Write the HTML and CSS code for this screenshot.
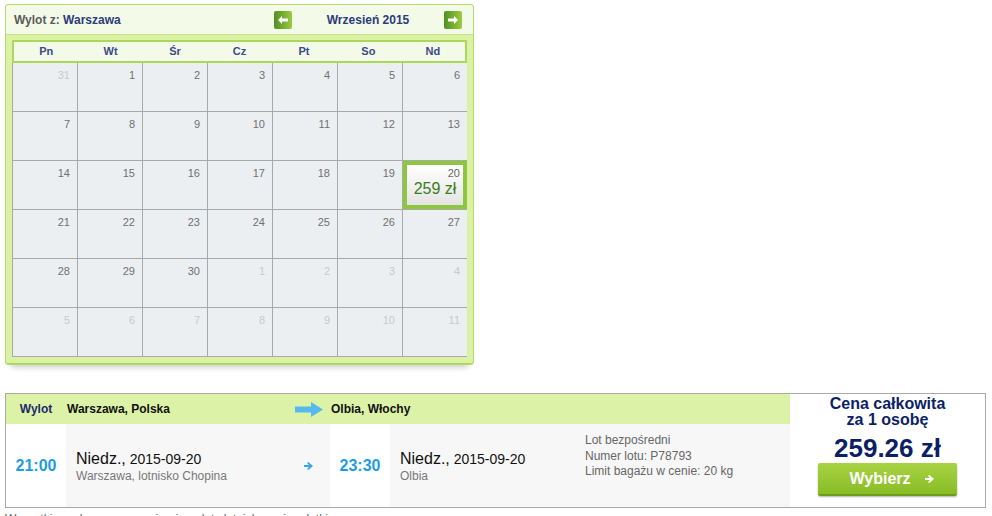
FILE: index.html
```html
<!DOCTYPE html>
<html>
  <head>
    <title>Wybór lotu</title>
    <link rel="stylesheet" href="styles.css">
  </head>
  <body>
    <div class="calendar">
      <div class="cal-head">
        <div class="from">Wylot z: <span class="city">Warszawa</span></div>
        <div class="month-nav">
          <button class="nav-btn" title="Poprzedni miesiąc">
            <svg width="10" height="8" viewBox="0 0 10 8"><polygon points="0,4 4,0 4,2.5 10,2.5 10,5.5 4,5.5 4,8" fill="#fff"/></svg>
          </button>
          <span class="month">Wrzesień 2015</span>
          <button class="nav-btn" title="Następny miesiąc">
            <svg width="10" height="8" viewBox="0 0 10 8"><polygon points="10,4 6,0 6,2.5 0,2.5 0,5.5 6,5.5 6,8" fill="#fff"/></svg>
          </button>
        </div>
      </div>

      <div class="cal-body">
        <div class="day-names">
          <span>Pn</span><span>Wt</span><span>Śr</span><span>Cz</span><span>Pt</span><span>So</span><span>Nd</span>
        </div>
        <div class="days">
          <div class="day other">31</div>
          <div class="day">1</div>
          <div class="day">2</div>
          <div class="day">3</div>
          <div class="day">4</div>
          <div class="day">5</div>
          <div class="day">6</div>

          <div class="day">7</div>
          <div class="day">8</div>
          <div class="day">9</div>
          <div class="day">10</div>
          <div class="day">11</div>
          <div class="day">12</div>
          <div class="day">13</div>

          <div class="day">14</div>
          <div class="day">15</div>
          <div class="day">16</div>
          <div class="day">17</div>
          <div class="day">18</div>
          <div class="day">19</div>
          <div class="day selected">20<div class="price">259 zł</div></div>

          <div class="day">21</div>
          <div class="day">22</div>
          <div class="day">23</div>
          <div class="day">24</div>
          <div class="day">25</div>
          <div class="day">26</div>
          <div class="day">27</div>

          <div class="day">28</div>
          <div class="day">29</div>
          <div class="day">30</div>
          <div class="day other">1</div>
          <div class="day other">2</div>
          <div class="day other">3</div>
          <div class="day other">4</div>

          <div class="day other">5</div>
          <div class="day other">6</div>
          <div class="day other">7</div>
          <div class="day other">8</div>
          <div class="day other">9</div>
          <div class="day other">10</div>
          <div class="day other">11</div>
        </div>
      </div>
    </div>

    <div class="flight">
      <div class="flight-main">
        <div class="flight-head">
          <div class="label">Wylot</div>
          <div class="place">
            Warszawa, Polska
            <svg class="big-arrow" width="28" height="15" viewBox="0 0 28 15"><polygon points="0,4.5 16,4.5 16,0 28,7.5 16,15 16,10.5 0,10.5" fill="#55b9ef"/></svg>
          </div>
          <div class="place dest">Olbia, Włochy</div>
        </div>
        <div class="flight-row">
          <div class="time">21:00</div>
          <div class="stop">
            <div>
              <div class="date"><span class="weekday">Niedz.,</span> 2015-09-20</div>
              <div class="airport">Warszawa, lotnisko Chopina</div>
            </div>
            <svg class="small-arrow" width="9" height="8" viewBox="0 0 9 8"><polygon points="0,3 5,3 3,1 4.3,0 9,4 4.3,8 3,7 5,5 0,5" fill="#39a7e2"/></svg>
          </div>
          <div class="time">23:30</div>
          <div class="stop arrival">
            <div class="arr-place">
              <div class="date"><span class="weekday">Niedz.,</span> 2015-09-20</div>
              <div class="airport">Olbia</div>
            </div>
            <div class="info">
              Lot bezpośredni<br>
              Numer lotu: P78793<br>
              Limit bagażu w cenie: 20 kg
            </div>
          </div>
        </div>
      </div>
      <div class="total">
        <div class="total-label">Cena całkowita<br>za 1 osobę</div>
        <div class="total-price">259.26 zł</div>
        <button class="choose">Wybierz
          <svg width="9" height="8" viewBox="0 0 9 8"><polygon points="0,3 5,3 3,1 4.3,0 9,4 4.3,8 3,7 5,5 0,5" fill="#fff"/></svg>
        </button>
      </div>
    </div>

    <p class="note">Wszystkie podane ceny zawierają opłaty lotniskowe i podatki.</p>
  </body>
</html>
```

FILE: styles.css
```css
body {
  margin: 0;
  padding: 4px 5px;
  font-family: "Liberation Sans", Arial, sans-serif;
  background: #fff;
  color: #333;
}

/* kalendarz */
.calendar {
  width: 467px;
  border: 1px solid #b3da6c;
  border-radius: 3px;
  background: #dbf1a3;
  box-shadow: 0 8px 6px -6px rgba(0, 0, 0, 0.22);
}
.cal-head {
  height: 29px;
  display: flex;
  align-items: center;
  justify-content: space-between;
  padding: 0 11px 0 8px;
  background: #f3fae8;
  border-bottom: 1px solid #c3e28c;
  border-radius: 3px 3px 0 0;
  font-size: 12px;
  font-weight: bold;
}
.from {
  color: #5a5a5a;
}
.from .city,
.month {
  color: #2d3b7c;
}
.month-nav {
  width: 188px;
  display: flex;
  align-items: center;
  justify-content: space-between;
}
.nav-btn {
  width: 18px;
  height: 18px;
  padding: 0;
  border: none;
  border-radius: 2px;
  background: linear-gradient(to right, #4e8f25, #9ccb3d);
  display: flex;
  align-items: center;
  justify-content: center;
  cursor: pointer;
}
.cal-body {
  padding: 5px 6px 6px 6px;
  border-bottom: 1px solid #a9d45a;
  border-radius: 0 0 3px 3px;
}
.day-names {
  display: grid;
  grid-template-columns: repeat(7, 1fr);
  height: 19px;
  border: 2px solid #a9d85d;
  background: #f3fae8;
  font-size: 11px;
  font-weight: bold;
  color: #3b4a8b;
  text-align: center;
  line-height: 19px;
}
.days {
  display: grid;
  grid-template-columns: repeat(7, 64px);
  grid-auto-rows: 48px;
  gap: 1px;
  padding: 0 1px 1px 1px;
  background: #a9a9a9;
}
.day {
  background: #eceff2;
  text-align: right;
  padding: 6px 7px 0 0;
  font-size: 11px;
  color: #707070;
}
.day.other {
  color: #c9c9c9;
}
.day.selected {
  border: 4px solid #8dc63f;
  padding: 2px 3px 0 0;
  background: linear-gradient(#ffffff, #e4e4e4);
  color: #666;
}
.price {
  text-align: center;
  font-size: 16px;
  color: #3b7d1c;
  margin-top: 1px;
  padding-left: 3px;
}

/* lot */
.flight {
  display: flex;
  width: 979px;
  margin-top: 28px;
  border: 1px solid #aaa;
}
.flight-main {
  width: 784px;
}
.flight-head {
  display: grid;
  grid-template-columns: 60px 264px 460px;
  height: 30px;
  align-items: center;
  background: #dcf3a7;
  font-size: 12px;
  font-weight: bold;
}
.flight-head .label {
  text-align: center;
  color: #1c2a6b;
}
.place {
  display: flex;
  align-items: center;
  justify-content: space-between;
  color: #111;
  padding-left: 1px;
}
.big-arrow {
  margin-right: 7px;
}
.flight-row {
  display: grid;
  grid-template-columns: 60px 264px 60px 400px;
  height: 83px;
}
.time {
  background: #fff;
  display: flex;
  align-items: center;
  justify-content: center;
  padding-top: 1px;
  font-size: 16px;
  font-weight: bold;
  color: #1f9ce0;
}
.stop {
  background: #f7f7f7;
  display: flex;
  align-items: center;
  justify-content: space-between;
  padding: 1px 17px 0 10px;
}
.date {
  font-size: 14px;
  color: #111;
}
.weekday {
  font-size: 16px;
}
.airport {
  font-size: 12px;
  color: #777;
  margin-top: 1px;
}
.stop.arrival {
  justify-content: flex-start;
  padding-right: 0;
}
.arr-place {
  width: 185px;
}
.info {
  align-self: flex-start;
  margin-top: 8px;
  font-size: 12px;
  line-height: 15.5px;
  color: #666;
}
.total {
  flex: 1;
  display: flex;
  flex-direction: column;
  align-items: center;
  padding-top: 2px;
}
.total-label {
  font-size: 16px;
  font-weight: bold;
  line-height: 16px;
  text-align: center;
  color: #0c1f66;
}
.total-price {
  font-size: 26px;
  font-weight: bold;
  color: #0c1f66;
  margin-top: 5px;
  line-height: 30px;
}
.choose {
  width: 139px;
  height: 33px;
  margin-top: 0;
  border: none;
  border-bottom: 2px solid #6c9c1b;
  border-radius: 2px;
  background: linear-gradient(#a8d344, #88bd25);
  box-shadow: 0 1px 2px rgba(0, 0, 0, 0.3);
  color: #fff;
  font-family: "Liberation Sans", Arial, sans-serif;
  font-size: 16px;
  font-weight: bold;
  display: flex;
  align-items: center;
  justify-content: center;
  gap: 14px;
  padding: 0 0 0 8px;
  cursor: pointer;
}
.note {
  margin: 4px 0 0 0;
  font-size: 12px;
  color: #666;
}
```
